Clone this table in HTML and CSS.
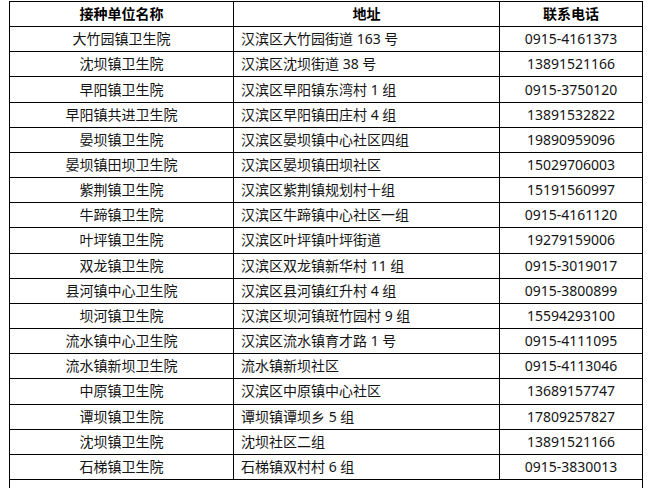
FILE: index.html
```html
<!DOCTYPE html>
<html lang="zh-CN">
<head>
<meta charset="utf-8">
<link rel="stylesheet" href="styles.css">
</head>
<body>
<table class="sites">
  <colgroup>
    <col class="c-name">
    <col class="c-addr">
    <col class="c-tel">
  </colgroup>
  <thead>
    <tr><th>接种单位名称</th><th>地址</th><th>联系电话</th></tr>
  </thead>
  <tbody>
    <tr><td class="name">大竹园镇卫生院</td><td class="addr">汉滨区大竹园街道 163 号</td><td class="tel">0915-4161373</td></tr>
    <tr><td class="name">沈坝镇卫生院</td><td class="addr">汉滨区沈坝街道 38 号</td><td class="tel">13891521166</td></tr>
    <tr><td class="name">早阳镇卫生院</td><td class="addr">汉滨区早阳镇东湾村 1 组</td><td class="tel">0915-3750120</td></tr>
    <tr><td class="name">早阳镇共进卫生院</td><td class="addr">汉滨区早阳镇田庄村 4 组</td><td class="tel">13891532822</td></tr>
    <tr><td class="name">晏坝镇卫生院</td><td class="addr">汉滨区晏坝镇中心社区四组</td><td class="tel">19890959096</td></tr>
    <tr><td class="name">晏坝镇田坝卫生院</td><td class="addr">汉滨区晏坝镇田坝社区</td><td class="tel">15029706003</td></tr>
    <tr><td class="name">紫荆镇卫生院</td><td class="addr">汉滨区紫荆镇规划村十组</td><td class="tel">15191560997</td></tr>
    <tr><td class="name">牛蹄镇卫生院</td><td class="addr">汉滨区牛蹄镇中心社区一组</td><td class="tel">0915-4161120</td></tr>
    <tr><td class="name">叶坪镇卫生院</td><td class="addr">汉滨区叶坪镇叶坪街道</td><td class="tel">19279159006</td></tr>
    <tr><td class="name">双龙镇卫生院</td><td class="addr">汉滨区双龙镇新华村 11 组</td><td class="tel">0915-3019017</td></tr>
    <tr><td class="name">县河镇中心卫生院</td><td class="addr">汉滨区县河镇红升村 4 组</td><td class="tel">0915-3800899</td></tr>
    <tr><td class="name">坝河镇卫生院</td><td class="addr">汉滨区坝河镇斑竹园村 9 组</td><td class="tel">15594293100</td></tr>
    <tr><td class="name">流水镇中心卫生院</td><td class="addr">汉滨区流水镇育才路 1 号</td><td class="tel">0915-4111095</td></tr>
    <tr><td class="name">流水镇新坝卫生院</td><td class="addr">流水镇新坝社区</td><td class="tel">0915-4113046</td></tr>
    <tr><td class="name">中原镇卫生院</td><td class="addr">汉滨区中原镇中心社区</td><td class="tel">13689157747</td></tr>
    <tr><td class="name">谭坝镇卫生院</td><td class="addr">谭坝镇谭坝乡 5 组</td><td class="tel">17809257827</td></tr>
    <tr><td class="name">沈坝镇卫生院</td><td class="addr">沈坝社区二组</td><td class="tel">13891521166</td></tr>
    <tr><td class="name">石梯镇卫生院</td><td class="addr">石梯镇双村村 6 组</td><td class="tel">0915-3830013</td></tr>
    <tr class="tail"><td colspan="3"></td></tr>
  </tbody>
</table>
</body>
</html>
```

FILE: styles.css
```css
html, body {
  margin: 0;
  padding: 0;
  background: #ffffff;
}

body {
  font-family: "Noto Sans", "Noto Sans CJK SC", sans-serif;
  font-size: 14px;
  color: #141414;
}

.sites {
  border-collapse: collapse;
  table-layout: fixed;
  width: 634px;
  margin: 1px 0 0 9px;
}

.c-name { width: 224px; }
.c-addr { width: 266px; }
.c-tel { width: 143px; }

.sites th,
.sites td {
  border: 1px solid #000;
  height: 24.16px;
  padding: 0;
  line-height: 18px;
  vertical-align: middle;
  white-space: nowrap;
}

.sites th {
  font-weight: 700;
  text-align: center;
  color: #000;
}

.sites td.name,
.sites td.tel {
  text-align: center;
}

.sites td.addr {
  text-align: left;
  padding-left: 7px;
}

.sites .tail td {
  height: 40px;
}
```
